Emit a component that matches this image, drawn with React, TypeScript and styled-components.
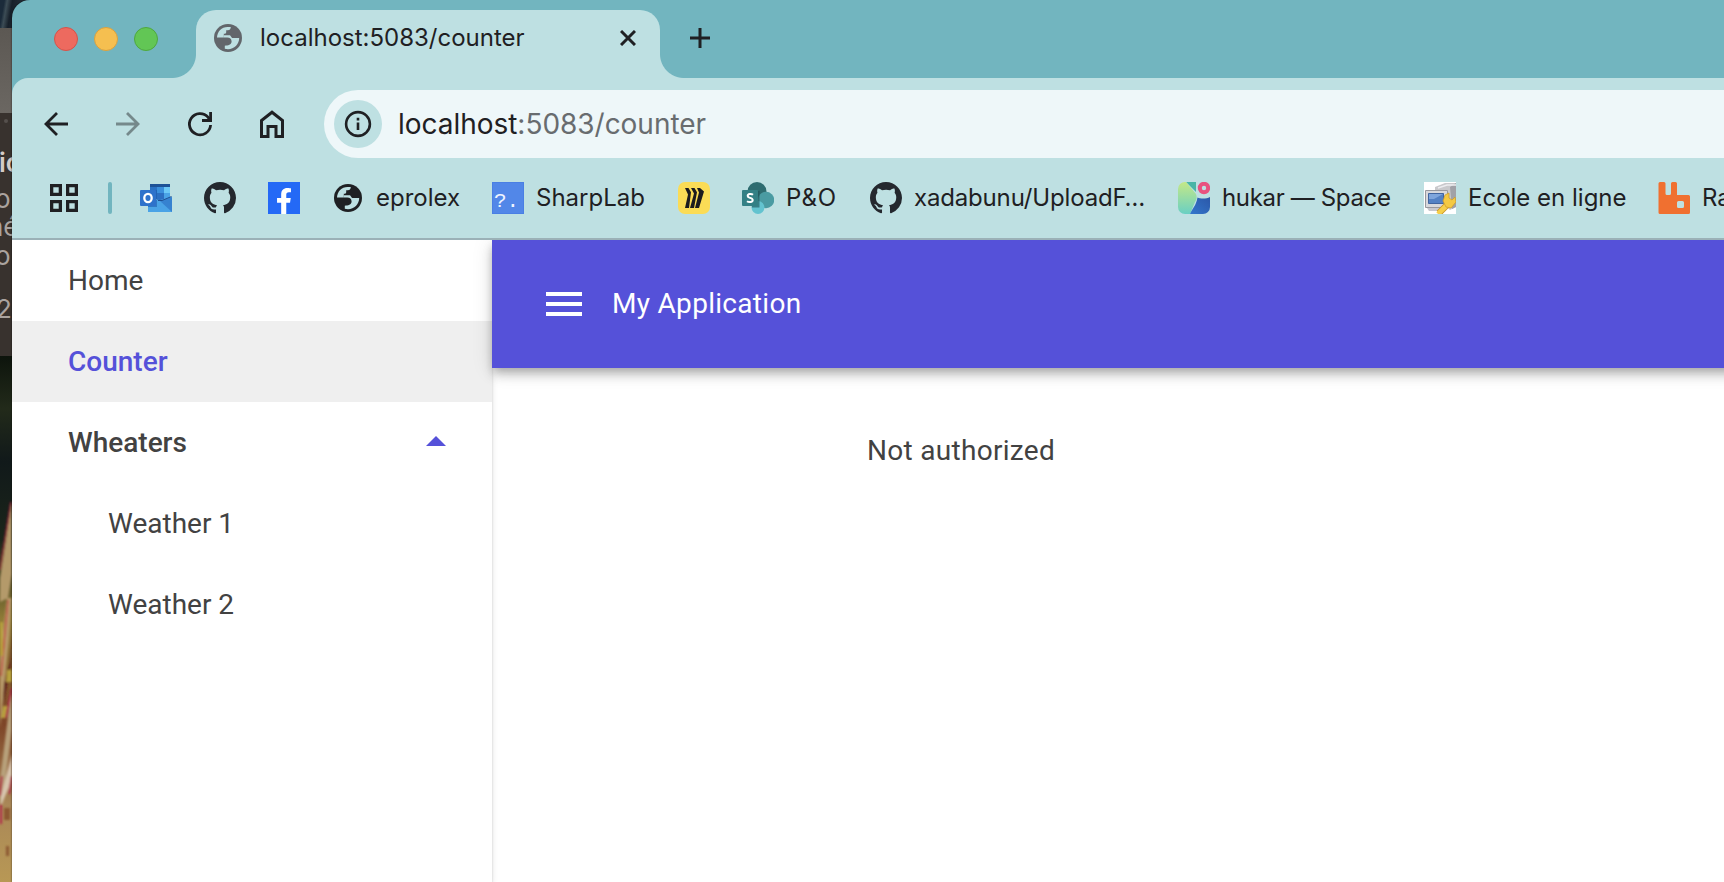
import React from "react";
import styled, { createGlobalStyle } from "styled-components";
import { FaFacebookF } from "react-icons/fa";

const color = {
  strip: "#72b5bf",
  toolbar: "#bee0e2",
  field: "#eef7f9",
  ink: "#1f2023",
  primary: "#5551d9",
  text: "#424242",
};

const GlobalStyle = createGlobalStyle`
  * { box-sizing: border-box; }
  body { margin: 0; overflow: hidden; background: #38322e; }
  svg { display: block; flex: none; }
`;

/* ---------- desktop behind the browser ---------- */

const Screen = styled.div`
  position: relative;
  display: flex;
  height: 882px;
  padding-left: 12px;
  overflow: hidden;
`;

const Desktop = styled.div`
  position: absolute;
  inset: 0 auto 0 0;
  width: 32px;
  display: flex;
  flex-direction: column;
`;

const PhotoTop = styled.div`
  height: 28px;
  background: linear-gradient(100deg, #1b2b3a 0 12%, #3c4c55 20%, #17202a 34%, #232c35 60%);
`;

const BackTitle = styled.div`
  height: 85px;
  background: linear-gradient(#5c5853, #6b6762);
`;

const BackWindow = styled.div`
  height: 243px;
  overflow: hidden;
  background: #38322e;
  font: 26px/28px Inter, "Liberation Sans", sans-serif;
  color: #aaa39f;
`;

const Fragment = styled.div<{ $gap: number; $shift: number; $bold?: boolean }>`
  height: 28px;
  margin-top: ${(p) => p.$gap}px;
  margin-left: ${(p) => p.$shift}px;
  font-weight: ${(p) => (p.$bold ? 600 : 400)};
  color: ${(p) => (p.$bold ? "#d3ccc8" : "inherit")};
  white-space: nowrap;
`;

const Dot = styled.div`
  width: 4px;
  height: 4px;
  margin: 6px 0 0 4px;
  border-radius: 50%;
  background: #55504c;
`;

/* ---------- browser chrome ---------- */

const Browser = styled.div`
  position: relative;
  flex: 1;
  min-width: 0;
  display: flex;
  flex-direction: column;
  overflow: hidden;
  border-top-left-radius: 18px;
  background: ${color.strip};
  box-shadow: 0 0 2px rgba(0, 0, 0, 0.7);
  font-family: Inter, "Liberation Sans", sans-serif;
  color: ${color.ink};
`;

const TabStrip = styled.div`
  display: flex;
  height: 78px;
  padding: 10px 0 0 42px;
`;

const Lights = styled.div`
  display: flex;
  gap: 16px;
  width: 142px;
  padding-top: 17px;
`;

const Light = styled.span<{ $fill: string; $edge: string }>`
  width: 24px;
  height: 24px;
  border-radius: 50%;
  background: ${(p) => p.$fill};
  border: 1px solid ${(p) => p.$edge};
`;

const Tab = styled.div`
  position: relative;
  display: flex;
  align-items: center;
  width: 464px;
  height: 68px;
  padding: 0 24px 12px 18px;
  border-radius: 20px 20px 0 0;
  background: ${color.toolbar};
  &::before,
  &::after {
    content: "";
    position: absolute;
    bottom: 0;
    width: 24px;
    height: 24px;
  }
  &::before {
    left: -24px;
    background: radial-gradient(circle at 0 0, transparent 23.5px, ${color.toolbar} 24.5px);
  }
  &::after {
    right: -24px;
    background: radial-gradient(circle at 100% 0, transparent 23.5px, ${color.toolbar} 24.5px);
  }
`;

const TabTitle = styled.span`
  flex: 1;
  margin-left: 18px;
  padding-bottom: 1px;
  font-size: 24px;
  line-height: 30px;
`;

const NewTab = styled.div`
  padding: 18px 0 0 30px;
`;

const Toolbar = styled.div`
  display: flex;
  align-items: center;
  height: 92px;
  padding-left: 30px;
  border-top-left-radius: 16px;
  background: ${color.toolbar};
`;

const NavButton = styled.div<{ $dim?: boolean }>`
  width: 72px;
  opacity: ${(p) => (p.$dim ? 0.45 : 1)};
`;

const AddressField = styled.div`
  display: flex;
  align-items: center;
  flex: 1;
  height: 68px;
  margin-left: -6px;
  padding-left: 10px;
  border-radius: 34px 0 0 34px;
  background: ${color.field};
`;

const SiteInfo = styled.div`
  display: flex;
  align-items: center;
  justify-content: center;
  width: 48px;
  height: 48px;
  border-radius: 50%;
  background: ${color.toolbar};
`;

const Url = styled.div`
  margin-left: 16px;
  font-size: 28px;
  line-height: 34px;
  letter-spacing: -0.03px;
  white-space: nowrap;
`;

const UrlPath = styled.span`
  color: #686c6f;
`;

const Bookmarks = styled.div`
  display: flex;
  align-items: center;
  gap: 32px;
  height: 70px;
  padding: 0 0 12px 36px;
  border-bottom: 2px solid #9bb1b7;
  background: ${color.toolbar};
  overflow: hidden;
`;

const Divider = styled.span`
  flex: none;
  width: 4px;
  height: 32px;
  margin: 0 -4px;
  border-radius: 2px;
  background: ${color.strip};
`;

const Bookmark = styled.div`
  display: flex;
  align-items: center;
  flex: none;
  gap: 12px;
`;

const BookmarkLabel = styled.span<{ $width: number; $tracking?: number }>`
  width: ${(p) => p.$width}px;
  padding-bottom: 1px;
  font-size: 24px;
  line-height: 30px;
  letter-spacing: ${(p) => p.$tracking ?? 0}px;
  white-space: nowrap;
`;

const FacebookTile = styled.div`
  display: flex;
  justify-content: center;
  align-items: flex-end;
  width: 32px;
  height: 32px;
  background: #2469f6;
  color: #fff;
`;

const SharpTile = styled.div`
  width: 32px;
  height: 32px;
  padding-left: 1px;
  background: #5287e8;
  border: 1px solid #4a7fe4;
  color: #eef3ff;
  font: 21px/38px "Liberation Mono", monospace;
`;

/* ---------- web page ---------- */

const Page = styled.div`
  position: relative;
  display: flex;
  flex: 1;
  overflow: hidden;
  background: #fff;
  color: ${color.text};
  font-family: Roboto, "Liberation Sans", sans-serif;
  font-size: 28px;
`;

const Drawer = styled.nav`
  width: 480px;
  background: #fff;
  box-shadow: 0 2px 2px rgba(0, 0, 0, 0.14), 0 2px 6px rgba(0, 0, 0, 0.12);
  z-index: 1;
`;

const NavItem = styled.div<{ $active?: boolean; $strong?: boolean; $nested?: boolean }>`
  display: flex;
  align-items: center;
  justify-content: space-between;
  height: 81px;
  padding: 0 46px 1px ${(p) => (p.$nested ? 96 : 56)}px;
  background: ${(p) => (p.$active ? "#efefef" : "transparent")};
  color: ${(p) => (p.$active ? color.primary : "inherit")};
  font-weight: ${(p) => (p.$active || p.$strong ? 500 : 400)};
`;

const Main = styled.main`
  display: flex;
  flex-direction: column;
  flex: 1;
  z-index: 2;
`;

const AppBar = styled.header`
  display: flex;
  align-items: center;
  gap: 30px;
  height: 128px;
  margin-right: -40px;
  padding-left: 54px;
  background: ${color.primary};
  color: #fff;
  letter-spacing: 0.3px;
  box-shadow: 0 4px 8px -2px rgba(0, 0, 0, 0.2), 0 8px 10px rgba(0, 0, 0, 0.14),
    0 2px 20px rgba(0, 0, 0, 0.12);
`;

const AppTitle = styled.span`
  padding-bottom: 2px;
`;

const Content = styled.section`
  padding: 66px 0 0 375px;
  line-height: 34px;
  letter-spacing: 0.3px;
`;

/* ---------- icons ---------- */

const Globe = ({ fill, land }: { fill: string; land: string }) => (
  <svg width="28" height="28" viewBox="0 0 28 28">
    <circle cx="14" cy="14" r="14" fill={fill} />
    <path
      fill={land}
      d="M3 13.6C3.200 7.600 7.600 3 13.600 3H16.800C16.800 5 15.600 6.300 13.800 6.300H12.200V8.200C12.200 9.300 11.200 9.800 9.800 9.800V13.600H3Z"
    />
    <path
      fill={land}
      d="M9.800 11.200H15.500C17 11.200 17.200 14.100 19 14.100H25.200C25.200 20.300 20.200 25.200 14 25.200C12.800 25.200 11.800 25 10.800 24.700V21.700C14 21.700 17.600 20.800 17.600 17.600C17.600 15 16 13.600 13.200 13.600H9.800Z"
    />
  </svg>
);

const GitHubMark = () => (
  <svg width="32" height="32" viewBox="0 0 16 16" fill="#24282e">
    <path d="M8 0C3.58 0 0 3.58 0 8c0 3.54 2.29 6.53 5.47 7.59.4.07.55-.17.55-.38 0-.19-.01-.82-.01-1.49-2.01.37-2.53-.49-2.69-.94-.09-.23-.48-.94-.82-1.13-.28-.15-.68-.52-.01-.53.63-.01 1.08.58 1.23.82.72 1.21 1.87.87 2.33.66.07-.52.28-.87.51-1.07-1.78-.2-3.64-.89-3.64-3.95 0-.87.31-1.59.82-2.15-.08-.2-.36-1.02.08-2.12 0 0 .67-.21 2.2.82.64-.18 1.32-.27 2-.27s1.36.09 2 .27c1.53-1.04 2.2-.82 2.2-.82.44 1.1.16 1.92.08 2.12.51.56.82 1.27.82 2.15 0 3.07-1.87 3.75-3.65 3.95.29.25.54.73.54 1.48 0 1.07-.01 1.93-.01 2.2 0 .21.15.46.55.38A8.01 8.01 0 0 0 16 8c0-4.42-3.58-8-8-8z" />
  </svg>
);

const Outlook = () => (
  <svg width="32" height="32" viewBox="0 0 32 32">
    <path fill="#1d5297" d="M10 2h20v5H10z" />
    <path fill="#2a72c4" d="M10 5h7v12h-7z" />
    <path fill="#3a8fdc" d="M17 5h7v6h-7z" />
    <path fill="#6cc8f6" d="M24 5h6v6h-6z" />
    <path fill="#2c6fc2" d="M17 11h7v7h-7z" />
    <path fill="#4aa3e6" d="M24 11h6v6h-6z" />
    <path fill="#4aa3e6" d="M8 17l12 1 12-3v15H8z" />
    <path fill="#3682d0" d="M20 19l12-4v15z" />
    <path fill="none" stroke="#1f4f92" d="M18 18.500h4l9.500-4" />
    <path fill="#1b58a8" d="M8 8h9v17H8z" opacity=".55" />
    <rect y="8" width="16" height="16" rx="1" fill="#2e72cb" />
    <ellipse cx="8" cy="16" rx="3.700" ry="4.200" fill="none" stroke="#fff" strokeWidth="2.300" />
  </svg>
);

const Miro = () => (
  <svg width="32" height="32" viewBox="0 0 32 32">
    <rect width="32" height="32" rx="7" fill="#fbdc56" />
    <g fill="#1c1b1e">
      <path d="M7 6h3.500l2.500 4.200L11 26H7l3-13.500z" />
      <path d="M13 6h3.500l2.500 4.200L16 26h-4l4-14.500z" />
      <path d="M19 6h3l4 3.500L21 26h-4l4-15.500z" />
    </g>
  </svg>
);

const SharePoint = () => (
  <svg width="32" height="32" viewBox="0 0 32 32">
    <circle cx="15" cy="9.500" r="9.500" fill="#2e6c70" />
    <circle cx="24" cy="18" r="8.200" fill="#4a9ba2" />
    <circle cx="16" cy="25.500" r="6.500" fill="#63c3cf" />
    <path d="M8 9h9.500v16.500H10z" fill="#1d5257" opacity=".6" />
    <rect y="8" width="16" height="16" rx="1" fill="#338085" />
    <path
      d="M11 12.700C9.500 11.400 5.700 11.600 5.700 13.900C5.700 16.400 10.700 15.300 10.700 18.100C10.700 20.500 6.800 20.600 5 19.200"
      fill="none"
      stroke="#fff"
      strokeWidth="2"
    />
  </svg>
);

const SpaceIcon = () => (
  <svg width="32" height="32" viewBox="0 0 32 32">
    <defs>
      <linearGradient id="leaf" x1="0" y1="0" x2="0" y2="1">
        <stop offset="0" stopColor="#c4e887" />
        <stop offset="1" stopColor="#69cfc3" />
      </linearGradient>
      <linearGradient id="sea" x1="0" y1="1" x2="1" y2="0">
        <stop offset="0" stopColor="#3377cc" />
        <stop offset="1" stopColor="#2b57a8" />
      </linearGradient>
    </defs>
    <path fill="#49b5a6" d="M8 0h10v10z" />
    <path fill="url(#leaf)" d="M7 0h1l10 12c1 3 1 5-1 8l-5 12H7a7 7 0 0 1-7-7V7a7 7 0 0 1 7-7z" />
    <path fill="url(#sea)" d="M19.500 15.500c3 1.500 9 1.500 12.500-.500v10a7 7 0 0 1-7 7H12c2-5 6-8 7.500-16.500z" />
    <circle cx="26" cy="6" r="4.200" fill="none" stroke="#e8527f" strokeWidth="4" />
  </svg>
);

const SchoolIcon = () => (
  <svg width="32" height="32" viewBox="0 0 32 32">
    <path fill="#fff" d="M0 0h32v32H0z" />
    <path fill="#c9c9cc" d="M11 5l10-4h11v24l-6 3-15-12z" />
    <path fill="#a1a1a7" d="M26 5l6-4v24l-4 2z" />
    <path fill="none" stroke="#ededf0" strokeWidth="1.500" d="M14 6l9-3h9" />
    <path fill="#d8d8dc" stroke="#98989e" d="M1.500 8.500h22v17h-22z" />
    <path fill="#5481c4" stroke="#41649f" d="M4.500 11.500h15v10h-15z" />
    <path fill="#7fa5dc" d="M5 12h14l-9 5H5z" />
    <path fill="#c8c8ce" d="M3 26h17l2 3H5z" />
    <path fill="none" stroke="#c99524" strokeWidth="6.500" d="M15 31l11-11" />
    <path fill="none" stroke="#f6cf4b" strokeWidth="4.800" d="M14 32l12-12" />
    <path fill="#f4c943" stroke="#cf9e2c" strokeWidth=".8" d="M19 19l2-6 4-2v5l3 2 3-3 1 5-5 6-5-1z" />
  </svg>
);

const Rabbit = () => (
  <svg width="32" height="32" viewBox="0 0 32 32">
    <path
      fill="#f07030"
      fillRule="evenodd"
      d="M2 0h4a1.500 1.500 0 0 1 1.500 1.500v10A1.500 1.500 0 0 0 9 13h2.500a1.500 1.500 0 0 0 1.500-1.500v-10A1.500 1.500 0 0 1 14.500 0h3A1.500 1.500 0 0 1 19 1.500V13h11.500a1.500 1.500 0 0 1 1.500 1.500v16a1.500 1.500 0 0 1-1.500 1.500H2a1.500 1.500 0 0 1-1.500-1.500v-29A1.500 1.500 0 0 1 2 0zM20.500 19a1.500 1.500 0 0 0-1.500 1.500v4a1.500 1.500 0 0 0 1.500 1.500h4a1.500 1.500 0 0 0 1.500-1.500v-4a1.500 1.500 0 0 0-1.500-1.500z"
    />
  </svg>
);

const PhotoBottom = () => (
  <svg width="32" height="526" viewBox="0 0 32 526">
    <defs>
      <linearGradient id="shade" x1="0" y1="0" x2="0" y2="1">
        <stop offset="0" stopColor="#0d140c" />
        <stop offset=".1" stopColor="#222a1a" />
        <stop offset=".2" stopColor="#11191a" />
        <stop offset=".35" stopColor="#1b251a" />
        <stop offset=".5" stopColor="#8f7b36" />
        <stop offset=".7" stopColor="#7d4527" />
        <stop offset=".85" stopColor="#a98757" />
        <stop offset="1" stopColor="#b89855" />
      </linearGradient>
      <filter id="soft">
        <feGaussianBlur stdDeviation=".9" />
      </filter>
    </defs>
    <path fill="url(#shade)" d="M0 0h32v526H0z" />
    <g filter="url(#soft)">
      <path fill="#b49a6b" d="M12 146L8 170 0 222v24l8-4 4-24z" />
      <path fill="none" stroke="#a3253d" strokeWidth="1.500" d="M11 146L0 214" />
      <path fill="#b79a69" d="M7 242h5l-3 42-9 88v-70z" />
      <path fill="none" stroke="#c33a3f" strokeWidth="1.300" d="M8 244L1 320" />
      <path fill="#5d1c1c" d="M12 274l-1 34-8 42 1-22 6-22z" />
      <path fill="#b8a23e" d="M7 314h5v12H6zM0 266h3v34H0zM3 350h5l-1 12H1z" />
      <path fill="#b7a07a" d="M12 330L0 424v40l12-90z" />
      <path fill="#d8c5ae" d="M12 398L1 440v10l11-26z" />
      <path fill="none" stroke="#b02a4c" strokeWidth="2" d="M12 332L6 362M2 420L0 440M12 420l-3 18M1 448v20" />
      <path fill="#8c5830" d="M4 452h6v12H4zM6 490h3v10H6z" />
    </g>
  </svg>
);

const Stroke = ({ size, d, width }: { size: number; d: string; width: number }) => (
  <svg width={size} height={size} viewBox={`0 0 ${size} ${size}`} fill="none" stroke={color.ink} strokeWidth={width}>
    <path d={d} />
  </svg>
);

const bookmarks: { icon: React.ReactNode; label?: string; width?: number; tracking?: number }[] = [
  { icon: <Outlook /> },
  { icon: <GitHubMark /> },
  { icon: <FacebookTile><FaFacebookF size={26} /></FacebookTile> },
  {
    icon: (
      <svg width="32" height="28" viewBox="-2 0 32 28">
        <Globe fill={color.ink} land={color.toolbar} />
      </svg>
    ),
    label: "eprolex",
    width: 84,
  },
  { icon: <SharpTile>?.</SharpTile>, label: "SharpLab", width: 110 },
  { icon: <Miro /> },
  { icon: <SharePoint />, label: "P&O", width: 52, tracking: 0.9 },
  { icon: <GitHubMark />, label: "xadabunu/UploadF…", width: 232, tracking: -0.17 },
  { icon: <SpaceIcon />, label: "hukar — Space", width: 170, tracking: -0.35 },
  { icon: <SchoolIcon />, label: "Ecole en ligne", width: 158 },
  { icon: <Rabbit />, label: "RabbitMQ", width: 110 },
];

export default function App() {
  return (
    <Screen>
      <GlobalStyle />
      <Desktop>
        <PhotoTop />
        <BackTitle />
        <BackWindow>
          <Dot />
          <Fragment $gap={26} $shift={-1} $bold>ic</Fragment>
          <Fragment $gap={8} $shift={-5}>o</Fragment>
          <Fragment $gap={0} $shift={-12}>né</Fragment>
          <Fragment $gap={1} $shift={-5}>o</Fragment>
          <Fragment $gap={25} $shift={-4}>2</Fragment>
        </BackWindow>
        <PhotoBottom />
      </Desktop>

      <Browser>
        <TabStrip>
          <Lights>
            <Light $fill="#ed6a5f" $edge="#d5534a" />
            <Light $fill="#f5bf50" $edge="#d8a140" />
            <Light $fill="#62c655" $edge="#4fa73f" />
          </Lights>
          <Tab>
            <Globe fill="#62666b" land={color.toolbar} />
            <TabTitle>localhost:5083/counter</TabTitle>
            <Stroke size={16} width={3} d="M1 1L15 15M15 1L1 15" />
          </Tab>
          <NewTab>
            <Stroke size={20} width={3} d="M10 0V20M0 10H20" />
          </NewTab>
        </TabStrip>

        <Toolbar>
          <NavButton>
            <Stroke size={28} width={2.800} d="M26 14H4M15 3L4 14L15 25" />
          </NavButton>
          <NavButton $dim>
            <Stroke size={28} width={2.800} d="M2 14H24M13 3L24 14L13 25" />
          </NavButton>
          <NavButton>
            <svg width="28" height="28" viewBox="0 0 28 28" fill="none" stroke={color.ink} strokeWidth="2.800">
              <path d="M24.600 15A10.600 10.600 0 1 1 22 7.200L24.600 10" />
              <path d="M24.600 2V10.500H16" />
            </svg>
          </NavButton>
          <NavButton>
            <Stroke size={28} width={3} d="M3.500 26.500V10.500L14 2.200L24.500 10.500V26.500H18V16.500H10V26.500Z" />
          </NavButton>
          <AddressField>
            <SiteInfo>
              <svg width="28" height="28" viewBox="0 0 28 28" fill="none" stroke={color.ink} strokeWidth="2.600">
                <circle cx="14" cy="14" r="11.900" />
                <path d="M14 12.500V20M14 7.800V10.400" />
              </svg>
            </SiteInfo>
            <Url>
              localhost<UrlPath>:5083/counter</UrlPath>
            </Url>
          </AddressField>
        </Toolbar>

        <Bookmarks>
          <svg width="32" height="28" viewBox="0 0 32 28" fill="none" stroke={color.ink} strokeWidth="3.300">
            <path d="M3.650 1.650h8.700v8.700h-8.700zM19.650 1.650h8.700v8.700h-8.700zM3.650 17.650h8.700v8.700h-8.700zM19.650 17.650h8.700v8.700h-8.700z" />
          </svg>
          <Divider />
          {bookmarks.map((b, i) => (
            <Bookmark key={i}>
              {b.icon}
              {b.label && (
                <BookmarkLabel $width={b.width ?? 0} $tracking={b.tracking}>
                  {b.label}
                </BookmarkLabel>
              )}
            </Bookmark>
          ))}
        </Bookmarks>

        <Page>
          <Drawer>
            <NavItem>Home</NavItem>
            <NavItem $active>Counter</NavItem>
            <NavItem $strong>
              Wheaters
              <svg width="20" height="12" viewBox="0 0 20 12" fill={color.primary}>
                <path d="M0 10L10 0L20 10Z" />
              </svg>
            </NavItem>
            <NavItem $nested>Weather 1</NavItem>
            <NavItem $nested>Weather 2</NavItem>
          </Drawer>
          <Main>
            <AppBar>
              <svg width="36" height="24" viewBox="0 0 36 24" fill="#fff">
                <path d="M0 0h36v4H0zM0 10h36v4H0zM0 20h36v4H0z" />
              </svg>
              <AppTitle>My Application</AppTitle>
            </AppBar>
            <Content>Not authorized</Content>
          </Main>
        </Page>
      </Browser>
    </Screen>
  );
}
